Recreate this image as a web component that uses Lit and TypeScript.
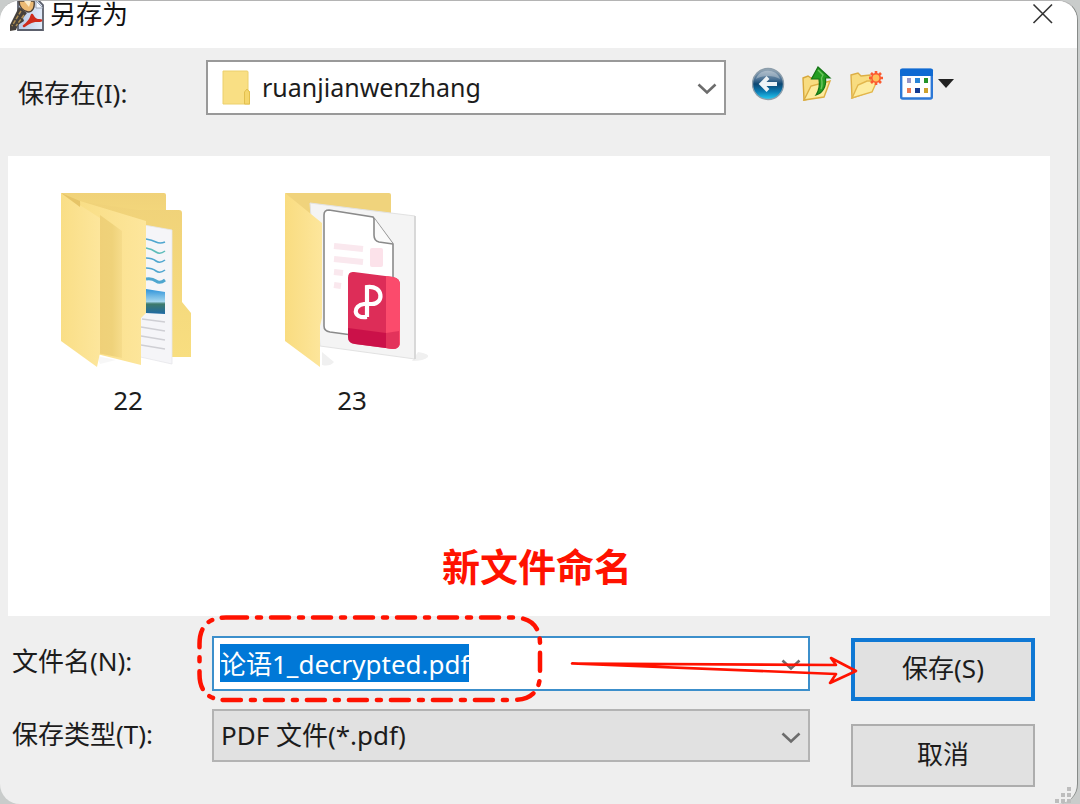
import { LitElement, html, css, svg } from "lit";
import { customElement, state, query } from "lit/decorators.js";

const chevron = html`<svg class="chevron" viewBox="0 0 20 12" width="20" height="12" aria-hidden="true">
  <path d="M1.500 1.500 L10 9.500 L18.500 1.500" fill="none" stroke="currentColor" stroke-width="2.600" />
</svg>`;

const appIcon = html`<svg viewBox="0 0 36 30" width="36" height="30" aria-hidden="true">
  <defs>
    <linearGradient id="sheet" x1="0" y1="0" x2="1" y2="0">
      <stop offset="0" stop-color="#b6c8e6" /><stop offset="1" stop-color="#e4edfb" />
    </linearGradient>
  </defs>
  <path d="M9 -2 H28 L34 4 V29 H9 Z" fill="url(#sheet)" stroke="#5c606c" stroke-width="1.800" />
  <path d="M27 0 L34 7 H27 Z" fill="#f4f8ff" stroke="#8d95a6" stroke-width=".8" />
  <path d="M15 25 C19 22 22 18 23 14 C25 18 28 20 32 19.500 C27 19 20 21 15 25 Z" fill="#cf2b1d" stroke="#cf2b1d" stroke-width="2.600" stroke-linejoin="round" />
  <path d="M10 0 H25 C26 6 24 11 19 11 C14 10 10 6 10 0 Z" fill="#ecba74" stroke="#4c4138" stroke-width="1.400" />
  <path d="M15 0 H22 L20 6 Z" fill="#fbeccb" />
  <path d="M10 6 L18 12 L14 17 L15 20 L9 24 L7 29 L1 30 L1 24 Z" fill="#45403b" />
  <path d="M12 10 L3 25 M15 14 L7 25" stroke="#b08f52" stroke-width="1.500" stroke-dasharray="4 1.500" />
</svg>`;

const smallFolder = html`<svg class="small-folder" viewBox="0 0 28 35" width="28" height="35" aria-hidden="true">
  <path d="M1 1 H25 Q26 1 26 2 V20 L28 22 V34 H1 Z" fill="#f9df84" stroke="#ecd06c" stroke-width="1" />
  <path d="M22.500 34 V22 L25 19 L27.500 22 V34 Z" fill="#f5d66c" stroke="#e2bf4e" stroke-width="1" />
</svg>`;

const backIcon = html`<svg viewBox="0 0 34 34" width="34" height="34" aria-hidden="true">
  <defs>
    <linearGradient id="orb" x1="0" y1="0" x2="0" y2="1">
      <stop offset="0" stop-color="#9aabb9" /><stop offset=".35" stop-color="#4a7194" />
      <stop offset=".5" stop-color="#0d4671" /><stop offset=".75" stop-color="#0a7db5" />
      <stop offset="1" stop-color="#27cdf3" />
    </linearGradient>
  </defs>
  <circle cx="16" cy="17" r="15.500" fill="url(#orb)" stroke="#8d9eab" stroke-width="1.400" />
  <path d="M4 12 C7 1 25 1 28 12 C21 8 11 8 4 12 Z" fill="#fff" opacity=".3" />
  <path d="M25 17 H10 M16 10.500 L9.500 17 L16 23.500" fill="none" stroke="#eef3f6" stroke-width="4" />
</svg>`;

const upIcon = html`<svg viewBox="0 0 32 36" width="32" height="36" aria-hidden="true">
  <path d="M1 12 L6 10 L9 12 L20 9 L22 29 L2 34 Z" fill="#f8dc80" stroke="#d7a83c" stroke-width="1.400" />
  <path d="M2 34 L9 20 L28 15 L22 31 Z" fill="#fdeb9e" stroke="#dcae42" stroke-width="1.400" />
  <path d="M16 1 L28 12 L23.500 12 C24.500 20 21 27 14 29 C17.500 24 18 19 17 13 L9.500 13 Z" fill="#259d22" stroke="#147315" stroke-width="1.200" />
  <path d="M16 4 L21 9 L19.500 12 C20.500 18 20 21 19 23" fill="none" stroke="#6cc45c" stroke-width="1.400" />
</svg>`;

const newFolderIcon = html`<svg viewBox="0 0 34 34" width="34" height="34" aria-hidden="true">
  <path d="M1 8 L8 6 L11 9 L20 8 L22 24 L2 31 Z" fill="#f8dc80" stroke="#dcae45" stroke-width="1.400" />
  <path d="M2 31 L8 18 L17 14 L27 14 L22 25 Z" fill="#fdec9f" stroke="#e2b64c" stroke-width="1.400" />
  <g stroke="#fb5b31" stroke-width="2.600">
    <path d="M26 4 V18 M19 11 H33 M21 6 L31 16 M31 6 L21 16" />
  </g>
  <circle cx="26" cy="11" r="4.200" fill="#ffc05a" stroke="#fb5b31" stroke-width="1.600" />
</svg>`;

const viewIcon = html`<svg viewBox="0 0 54 32" width="54" height="32" aria-hidden="true">
  <rect x="1.200" y="2" width="30.600" height="28.500" rx="1.500" fill="#fff" stroke="#2d78d6" stroke-width="2.400" />
  <path d="M0 2.500 Q0 .5 2 .5 H31 Q33 .5 33 2.500 V8 H0 Z" fill="#0f6ad2" />
  <rect x="7" y="10" width="4" height="5" fill="#9897c8" /><rect x="15" y="10" width="5" height="5" fill="#2a86d8" />
  <rect x="24" y="10" width="4" height="5" fill="#259327" /><rect x="7" y="20" width="4" height="5" fill="#ee7a52" />
  <rect x="15" y="20" width="5" height="5" fill="#143b93" /><rect x="24" y="20" width="4" height="5" fill="#cda22e" />
  <path d="M38 11 H54 L46 20 Z" fill="#222" />
</svg>`;

const docFolder = html`<svg viewBox="0 0 144 184" width="144" height="184" aria-hidden="true">
  <defs>
    <linearGradient id="fold-a" x1="0" y1="0" x2="1" y2="0">
      <stop offset="0" stop-color="#f9de86" /><stop offset="1" stop-color="#fde69c" />
    </linearGradient>
    <linearGradient id="fold-b" x1="0" y1="0" x2="0" y2="1">
      <stop offset="0" stop-color="#f0d279" /><stop offset="1" stop-color="#f8de80" />
    </linearGradient>
    <linearGradient id="crease" x1="0" y1="0" x2="1" y2="0">
      <stop offset="0" stop-color="#efd078" /><stop offset=".6" stop-color="#efd27a" /><stop offset="1" stop-color="#f6dc8b" />
    </linearGradient>
    <linearGradient id="sky" x1="0" y1="0" x2="0" y2="1">
      <stop offset="0" stop-color="#2f93d9" /><stop offset=".5" stop-color="#a4d6ee" />
      <stop offset=".6" stop-color="#3e7a6b" /><stop offset="1" stop-color="#1f6aa5" />
    </linearGradient>
  </defs>
  <path d="M41 168 L60 172 L44 176 Z" fill="#f7f7f7" />
  <path d="M5 5 H108 Q110 5 110 7 V60 H30 Z" fill="url(#fold-b)" />
  <path d="M22 13 L82 22 H123 Q126 22 126 25 V114 L135 125 V169 H92 Z" fill="url(#fold-b)" />
  <path d="M88 37 L116 42 V176 L80 168 Z" fill="#f5f5f8" stroke="#e6e6ea" stroke-width=".8" />
  <g fill="none" stroke="#4fa6cf" stroke-width="1.600">
    <path d="M90 51 Q96 52 100 54 T109 54" /><path d="M90 60 Q96 61 100 64 T109 63" stroke="#5dbcba" />
    <path d="M90 70 Q96 70 100 73 T109 72" /><path d="M90 80 Q96 80 100 83 T109 82" /><path d="M90 91 Q96 90 100 93 T109 92" stroke-width="3" />
  </g>
  <path d="M90 101 L109 104 V126 L90 125 Z" fill="url(#sky)" />
  <path d="M86 131 L109 134 M85 139 L109 143 M85 148 L109 152 M85 157 L109 161" stroke="#cfcfd4" stroke-width="1.400" />
  <path d="M24 13 L90 33 V125 L85 130 V177 L41 166 Z" fill="url(#fold-a)" />
  <path d="M44 27 L66 43 V170 L41 165 Z" fill="url(#crease)" />
  <path d="M5 5 L44 30 V165 L41 179 L5 153 Z" fill="url(#fold-a)" />
  <path d="M5 5 L24 19 L24 13 Z" fill="#e6c467" />
</svg>`;

const pdfFolder = html`<svg viewBox="0 0 154 184" width="154" height="184" aria-hidden="true">
  <defs>
    <linearGradient id="fold-c" x1="0" y1="0" x2="1" y2="0">
      <stop offset="0" stop-color="#f9dc80" /><stop offset="1" stop-color="#fde69c" />
    </linearGradient>
  </defs>
  <path d="M132 173 L138 164 Q150 166 148 169 Q144 173 132 173 Z" fill="#f0f0f0" />
  <path d="M42 164 L54 174 Q50 179 42 177 Z" fill="#f0f0f0" />
  <path d="M5 5 H109 Q111 5 111 7 V40 H30 Z" fill="#f0d37c" />
  <path d="M30 15 L135 28 V171 L40 158 Z" fill="#f4f4f4" stroke="#e2e2e2" stroke-width="1" />
  <path d="M135 28 V171" stroke="#d4d4d4" stroke-width="1.600" />
  <path d="M49 22 L93 29 L113 56 V140 L72 147 L50 144 Q44 143 44 138 V27 Q44 22 49 22 Z" fill="#fff" stroke="#8a8a8a" stroke-width="1.600" />
  <path d="M94 30 V47 Q94 53 99 54 L113 56" fill="#fafafa" stroke="#8a8a8a" stroke-width="1.600" />
  <path d="M54 58 L83 61 M54 71 L83 74 M54 84 L63 85 M54 97 L61 98" stroke="#fae8ee" stroke-width="6" />
  <rect x="90" y="60" width="13" height="19" rx="2" fill="#fce2ea" />
  <path d="M74 84 L113 89 Q120 90 120 97 V154 Q120 161 113 161 L75 156 Q68 155 68 149 V90 Q68 83 74 84 Z" fill="#dd2d58" />
  <path d="M106 88 L113 89 Q120 90 120 97 V154 Q120 161 113 161 L106 160 Z" fill="#fb4b6c" />
  <path d="M68 140 L106 145 V160 L75 156 Q68 155 68 149 Z" fill="#c80d47" opacity=".85" />
  <path d="M106 145 L119 143 V154 Q120 161 113 161 L106 160 Z" fill="#dd2d58" opacity=".8" />
  <path d="M87 129 V99 C104 97 104 116 92 116 H84 C73 117 72 131 87 129" fill="none" stroke="#fff" stroke-width="4.200" />
  <path d="M5 5 L42 35 V130 L40 138 V179 L5 153 Z" fill="url(#fold-c)" />
</svg>`;

@customElement("app-root")
export class AppRoot extends LitElement {
  @state() private fileName = "论语1_decrypted.pdf";
  @query("#file-name") private nameInput!: HTMLInputElement;

  private folders = [
    { name: "22", icon: docFolder },
    { name: "23", icon: pdfFolder },
  ];

  static styles = css`
    :host {
      display: block;
      min-height: 100vh;
      background: #c9cccb;
      color: #1c1c1c;
      font: 26px/36px "Noto Sans", "Noto Sans CJK SC", sans-serif;
    }
    * { box-sizing: border-box; }
    button, input, select { font: inherit; color: inherit; margin: 0; border-radius: 0; }
    svg { display: block; }
    .dialog {
      position: relative;
      display: flex;
      flex-direction: column;
      min-height: 100vh;
      margin-right: 2px;
      background: #efefef;
      border-top: 1px solid #b4b4b4;
      border-right: 1px solid #868a88;
      border-radius: 20px;
    }
    .titlebar {
      display: flex;
      justify-content: space-between;
      height: 47px;
      padding: 0 23px 0 9px;
      background: #fff;
      border-radius: 19px 19px 0 0;
    }
    .title {
      display: flex;
      gap: 5px;
      margin: 0;
      font-size: 26px;
      font-weight: 400;
      line-height: 26px;
      color: #111;
    }
    .close, .tool, .drop { display: block; padding: 0; border: 0; background: none; }
    .close { align-self: flex-start; padding-top: 2px; }
    .toolbar {
      display: flex;
      align-items: flex-start;
      height: 108px;
      padding: 12px 123px 0 18px;
    }
    .toolbar label { flex: 0 0 188px; padding-top: 15px; }
    .combo { position: relative; flex: 1; min-width: 0; }
    .combo select, .combo input {
      display: block;
      width: 100%;
      height: 55px;
      padding: 0 48px 2px 7px;
      border: 2px solid #999;
      outline: 0;
      appearance: none;
      background: #fff;
    }
    .combo.places select { padding-left: 54px; font-size: 25px; }
    .combo.types select { height: 53px; border-color: #b3b3b3; background: #e1e1e1; }
    .combo.name input { border-color: #3c8fcb; padding: 7px 48px 8px 6px; }
    .combo.name input::selection { background: #0078d7; color: #fff; }
    .small-folder { position: absolute; left: 16px; top: 10px; }
    .chevron { color: #6c6c6c; }
    .combo > .chevron, .drop { position: absolute; right: 9px; top: 23px; }
    .combo > .chevron { pointer-events: none; }
    .tools { display: flex; align-items: center; gap: 16px; padding: 6px 0 0 26px; }
    .list {
      display: flex;
      align-items: flex-start;
      gap: 70px;
      flex: 1;
      min-height: 459px;
      margin: 0 27px 0 8px;
      padding: 32px 48px;
      background: #fff;
    }
    .folder { display: flex; flex-direction: column; gap: 10px; width: 154px; }
    .folder span { width: 144px; text-align: center; }
    .footer { display: flex; gap: 41px; padding: 20px 42px 17px 12px; }
    .fields {
      flex: 1;
      display: grid;
      grid-template-columns: 200px 1fr;
      gap: 18px 0;
      align-content: start;
    }
    .fields label { padding-top: 7px; }
    .actions { display: flex; flex-direction: column; gap: 23px; width: 184px; padding-top: 2px; }
    .actions button {
      height: 63px;
      padding: 0 0 3px;
      border: 2px solid #adadad;
      background: #e1e1e1;
    }
    .actions .primary { border: 4px solid #0f78d4; }
    .note {
      position: absolute;
      left: 230px;
      bottom: 98px;
      margin: 0;
      color: #ff1200;
      font: 700 38px/56px "Noto Sans CJK SC", sans-serif;
      white-space: nowrap;
    }
    .frame, .arrow { position: absolute; pointer-events: none; overflow: visible; }
    .frame { left: -15px; top: -21px; }
    .arrow { right: -48px; top: 16px; }
    .grip { position: absolute; right: 5px; bottom: 0; }
  `;

  firstUpdated() {
    this.nameInput.focus();
    this.nameInput.select();
  }

  render() {
    return html`
      <main class="dialog">
        <header class="titlebar">
          <h1 class="title">${appIcon}<span>另存为</span></h1>
          <button class="close" aria-label="关闭">
            <svg viewBox="0 0 22 22" width="22" height="22" aria-hidden="true">
              <path d="M1.500 1.500 L20 20 M20 1.500 L1.500 20" stroke="#333" stroke-width="1.600" />
            </svg>
          </button>
        </header>
        <section class="toolbar">
          <label for="save-in">保存在(I):</label>
          <div class="combo places">
            <select id="save-in"><option>ruanjianwenzhang</option></select>
            ${smallFolder}${chevron}
          </div>
          <nav class="tools">
            <button class="tool" aria-label="后退">${backIcon}</button>
            <button class="tool" aria-label="向上一级">${upIcon}</button>
            <button class="tool" aria-label="新建文件夹">${newFolderIcon}</button>
            <button class="tool" aria-label="查看">${viewIcon}</button>
          </nav>
        </section>
        <div class="list" role="list">
          ${this.folders.map((f) => html`<div class="folder" role="listitem">${f.icon}<span>${f.name}</span></div>`)}
        </div>
        <section class="footer">
          <div class="fields">
            <label for="file-name">文件名(N):</label>
            <div class="combo name">
              <input id="file-name" .value=${this.fileName}
                @input=${(e: Event) => (this.fileName = (e.target as HTMLInputElement).value)} />
              <button class="drop" aria-label="历史文件名">${chevron}</button>
              <p class="note">新文件命名</p>
              <svg class="frame" viewBox="0 0 346 88" width="346" height="88" aria-hidden="true">
                <path d="M32 2.500 H316 Q343 2.500 343 29 V59 Q343 85 316 85 H29 Q2.500 85 2.500 59 V29 Q2.500 2.500 29 2.500 Z"
                  fill="none" stroke="#ff1200" stroke-width="4.500" stroke-linecap="round" stroke-dasharray="18 10 4 10" />
              </svg>
              <svg class="arrow" viewBox="0 0 288 40" width="288" height="40" aria-hidden="true">
                <path d="M2 11.500 L266 13 L261 6 L286 19 L260 31 L266 22 Z" fill="none" stroke="#ff1200"
                  stroke-width="2.600" stroke-linejoin="round" />
              </svg>
            </div>
            <label for="file-type">保存类型(T):</label>
            <div class="combo types">
              <select id="file-type"><option>PDF 文件(*.pdf)</option></select>
              ${chevron}
            </div>
          </div>
          <div class="actions">
            <button class="primary">保存(S)</button>
            <button>取消</button>
          </div>
        </section>
        <svg class="grip" viewBox="0 0 18 18" width="18" height="18" aria-hidden="true">
          ${[[13, 1], [7, 7], [13, 7], [1, 13], [7, 13], [13, 13]].map(
            ([x, y]) => svg`<rect x=${x} y=${y} width="4" height="4" fill="#bdbdbd" />`
          )}
        </svg>
      </main>
    `;
  }
}
